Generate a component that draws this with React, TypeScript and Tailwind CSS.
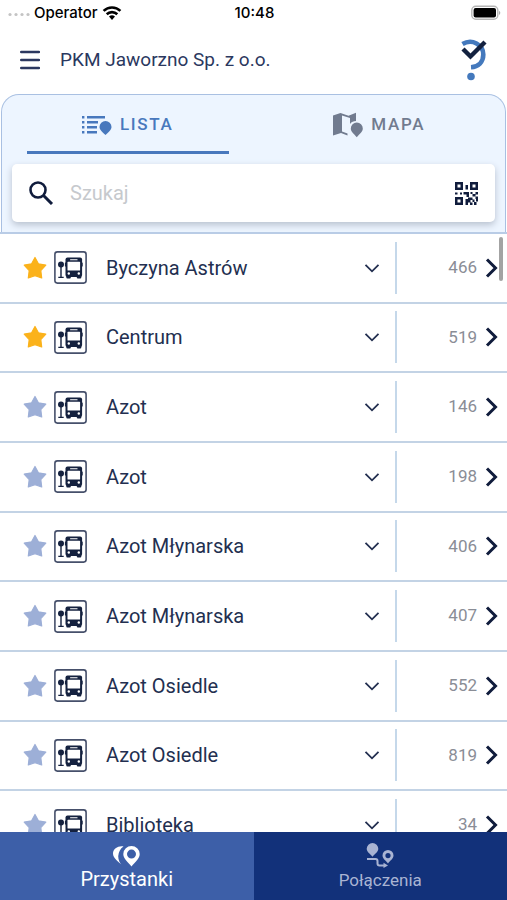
import { useState } from "react";

interface Stop {
  id: number;
  name: string;
  code: number;
  favourite: boolean;
}

const initialStops: Stop[] = [
  { id: 1, name: "Byczyna Astrów", code: 466, favourite: true },
  { id: 2, name: "Centrum", code: 519, favourite: true },
  { id: 3, name: "Azot", code: 146, favourite: false },
  { id: 4, name: "Azot", code: 198, favourite: false },
  { id: 5, name: "Azot Młynarska", code: 406, favourite: false },
  { id: 6, name: "Azot Młynarska", code: 407, favourite: false },
  { id: 7, name: "Azot Osiedle", code: 552, favourite: false },
  { id: 8, name: "Azot Osiedle", code: 819, favourite: false },
  { id: 9, name: "Biblioteka", code: 34, favourite: false },
];

function StatusBar() {
  return (
    <div className="grid grid-cols-3 items-center h-[26px] pl-2 pr-1.5 text-[15px] font-medium text-black font-['Inter',sans-serif]">
      <div className="flex items-center">
        <svg className="w-[22px] h-2 mr-1" viewBox="0 0 22 8" fill="#c4c4c4">
          <circle cx="2" cy="5.5" r="1.6" />
          <circle cx="8" cy="5.5" r="1.6" />
          <circle cx="14" cy="5.5" r="1.6" />
          <circle cx="20" cy="5.5" r="1.6" />
        </svg>
        Operator
        <svg className="w-5 h-4 ml-1" viewBox="0 0 20 16" fill="none" stroke="#000" strokeWidth="2.6">
          <path d="M1.6 5.9a12 12 0 0 1 16.8 0" />
          <path d="M4.7 9.3a7.6 7.6 0 0 1 10.6 0" />
          <path d="M7 11.6a4.3 4.3 0 0 1 6 0L10 15z" fill="#000" stroke="none" />
        </svg>
      </div>
      <span className="text-center">10:48</span>
      <svg className="w-[30px] h-4 justify-self-end" viewBox="0 0 30 16">
        <rect x="0.8" y="1.3" width="26" height="13" rx="4" fill="#fff" stroke="#b5b5b5" strokeWidth="1.4" />
        <rect x="2.6" y="3.1" width="22.4" height="9.4" rx="2" fill="#000" />
        <path d="M28.2 5.8c1.4.8 1.4 3.4 0 4.2z" fill="#999" />
      </svg>
    </div>
  );
}

function Logo() {
  return (
    <svg className="w-[26px] h-[42px]" viewBox="0 0 26 42" fill="none">
      <path
        d="M1.5 5C11-.5 22.3 5.500 22.300 15.500c0 7.500-5 12.300-12.300 12.700"
        stroke="#4479bd"
        strokeWidth="4.600"
      />
      <circle cx="10" cy="37.500" r="3.800" fill="#4479bd" />
      <path d="M2 10l7.500 7.500L24 3" stroke="#13213f" strokeWidth="4.400" />
    </svg>
  );
}

function ListIcon() {
  return (
    <svg className="w-[30px] h-5" viewBox="0 0 30 20" fill="currentColor">
      <path d="M0 1h2.400v2.400H0zM0 6h2.400v2.400H0zM0 11h2.400v2.400H0zM0 16h2.400v2.400H0zM5 1h18v2.600H5zM5 6h11v2.600H5zM5 11h10v2.600H5zM5 16h10v2.600H5z" />
      <path d="M23.500 6a6 6 0 0 1 6 6c0 3-3 5-6 8-3-3-6-5-6-8a6 6 0 0 1 6-6z" />
    </svg>
  );
}

function MapIcon() {
  return (
    <svg className="w-[30px] h-[26px]" viewBox="0 0 30 26" fill="currentColor">
      <path
        fillRule="evenodd"
        d="M0 3.500L7.500 1l8 2.700L23 .8V9c-2.500 0-4.500.8-6 3V6L9 3.500v16l5.500 1.900v2L8 21l-8 2.500z"
      />
      <path d="M23.800 10.500a6 6 0 0 1 6 6c0 3.200-3 5.200-6 8.700-3-3.500-6-5.500-6-8.700a6 6 0 0 1 6-6z" />
    </svg>
  );
}

function QrIcon() {
  return (
    <svg className="w-6 h-6" viewBox="0 0 24 24" fill="#101c3c">
      <path
        fillRule="evenodd"
        d="M0 1h8v8H0zM2.500 3.500v3h3v-3zM15 1h8v8h-8zM17.500 3.500v3h3v-3zM0 16h8v8H0zM2.500 18.500v3h3v-3z"
      />
      <path d="M10.500 4h2.500v4.500h-2.500zM0 11.500h2.500v2H0zM5 11.500h2v2H5zM8.500 11h5.500v5h-2.500v-2.500h-3zM15.500 11h2v2h-2zM20.500 11H23v2.500h-2.500zM17.500 13h3v2.500h-3zM10.500 18h2.500v-1.500h4.500V19h-2v2.500h-2.500V24h-2.500zM20.500 15.500H23v5h-2v-2.500h-.5zM17.500 18.500h2v2.500h-2zM15 21.500h2.500V24H15zM19 21h2.500v3H19z" />
    </svg>
  );
}

function StarIcon({ active }: { active: boolean }) {
  return (
    <svg
      className={active ? "w-6 h-6 text-[#fbb21b]" : "w-6 h-6 text-[#9dafd7]"}
      viewBox="0 0 24 24"
      fill="currentColor"
      stroke="currentColor"
      strokeWidth="1.200"
      strokeLinejoin="round"
    >
      <path d="M12 1.500l3.400 6.300 7.400 1.300-5 5.500.9 7.400L12 19.600l-6.700 2.400.9-7.400-5-5.500 7.400-1.300z" />
    </svg>
  );
}

function BusStopIcon() {
  return (
    <svg className="w-[33px] h-[33px] shrink-0" viewBox="0 0 33 33" fill="none">
      <rect x="0.900" y="0.900" width="31.200" height="31.200" rx="2.500" stroke="#46506b" strokeWidth="1.600" />
      <g fill="#14213f">
        <circle cx="7" cy="13.500" r="3" />
        <path d="M6.300 14h1.400v11.800h2V27H4.300v-1.200h2z" />
        <rect x="11.500" y="6.500" width="16.600" height="19.500" rx="2" />
        <rect x="10.900" y="11.500" width="17.800" height="4" rx="0.600" />
        <rect x="12.300" y="23" width="4.500" height="4.600" rx="1" />
        <rect x="22.800" y="23" width="4.500" height="4.600" rx="1" />
      </g>
      <g fill="#fff">
        <rect x="13.500" y="10.800" width="12.600" height="8.700" rx="0.600" />
        <rect x="16" y="8.200" width="7.600" height="1.100" rx="0.500" />
        <circle cx="14.800" cy="22.500" r="1.200" />
        <circle cx="24.800" cy="22.500" r="1.200" />
      </g>
    </svg>
  );
}

function StopRow({ stop, onToggle }: { stop: Stop; onToggle: () => void }) {
  return (
    <li className="flex items-center pl-[23px] pr-2 border-b-2 border-[#c3d3e5]">
      <button type="button" aria-label="Ulubiony" aria-pressed={stop.favourite} onClick={onToggle}>
        <StarIcon active={stop.favourite} />
      </button>
      <button type="button" className="flex flex-1 items-center pl-[7px] pr-[15px] text-left">
        <BusStopIcon />
        <span className="flex-1 pl-[19px] text-xl text-[#232f50]">{stop.name}</span>
        <svg className="w-4 h-2.5" viewBox="0 0 16 10" fill="none" stroke="#232f50" strokeWidth="1.800">
          <path d="M1.500 1.800L8 8.300l6.500-6.500" />
        </svg>
      </button>
      <a
        href="#odjazdy"
        className="flex items-center justify-end gap-2 w-[104px] h-[52px] border-l-2 border-[#c5d8ea] text-[17px] text-[#8a8d96]"
      >
        {stop.code}
        <svg className="w-3.5 h-5" viewBox="0 0 14 20" fill="none" stroke="#101c3c" strokeWidth="3">
          <path d="M2 1.500l8.500 8.500L2 18.500" />
        </svg>
      </a>
    </li>
  );
}

export default function App() {
  const [stops, setStops] = useState(initialStops);
  const [tab, setTab] = useState("lista");
  const [query, setQuery] = useState("");

  const toggleFavourite = (id: number) =>
    setStops(stops.map((s) => (s.id === id ? { ...s, favourite: !s.favourite } : s)));

  const visible = stops.filter((s) => s.name.toLowerCase().includes(query.toLowerCase()));

  return (
    <div className="flex flex-col h-screen bg-white font-['Roboto',sans-serif]">
      <StatusBar />

      {/* Header */}
      <header className="flex items-center h-[68px] px-5">
        <button type="button" aria-label="Menu">
          <svg className="w-5 h-5" viewBox="0 0 20 20" stroke="#2b3860" strokeWidth="2.400" strokeLinecap="round">
            <path d="M1.200 2h17.800M1.200 10h17.800M1.200 18h17.800" />
          </svg>
        </button>
        <h1 className="flex-1 pl-5 text-[19px] text-[#2b3860]">PKM Jaworzno Sp. z o.o.</h1>
        <Logo />
      </header>

      {/* Tabs and search */}
      <section className="mx-px pb-2.5 bg-[#edf5ff] border border-b-0 border-[#a9c0e2] rounded-t-[18px]">
        <div role="tablist" className="grid grid-cols-2 h-[59px]">
          <button
            type="button"
            role="tab"
            aria-selected={tab === "lista"}
            onClick={() => setTab("lista")}
            className="flex items-center justify-center gap-2 mx-[25px] pt-1 border-b-[3px] border-[#4878bd] text-[#4878bd] text-[17px] font-medium tracking-widest"
          >
            <ListIcon />
            LISTA
          </button>
          <button
            type="button"
            role="tab"
            aria-selected={tab === "mapa"}
            onClick={() => setTab("mapa")}
            className="flex items-center justify-center gap-2 mx-[25px] pt-1 border-b-[3px] border-transparent text-[#717b8f] text-[17px] font-medium tracking-widest"
          >
            <MapIcon />
            MAPA
          </button>
        </div>
        <div className="flex items-center h-[58px] mx-2.5 mt-[10px] px-4 bg-white rounded-[5px] shadow-[0_3px_7px_#b8c1cf]">
          <svg className="w-[26px] h-6" viewBox="0 0 26 24" fill="none" stroke="#101c3c">
            <circle cx="10" cy="9" r="7.500" strokeWidth="2.600" />
            <path d="M15.500 14.500l8.500 8.500" strokeWidth="3" />
          </svg>
          <input
            type="text"
            aria-label="Szukaj"
            placeholder="Szukaj"
            value={query}
            onChange={(e) => setQuery(e.target.value)}
            className="flex-1 min-w-0 pl-4 text-xl text-[#232f50] placeholder:text-[#c6c9cd] outline-none"
          />
          <button type="button" aria-label="Skanuj kod QR">
            <QrIcon />
          </button>
        </div>
      </section>

      {/* Stops */}
      <main className="relative flex-1 min-h-0 overflow-hidden border-t-2 border-[#b9cce6]">
        <ul className="grid grid-rows-9 h-[627px]">
          {visible.map((stop) => (
            <StopRow key={stop.id} stop={stop} onToggle={() => toggleFavourite(stop.id)} />
          ))}
        </ul>
        <div className="absolute top-[3px] right-1 w-1 h-11 rounded-full bg-[#a3a3a3]" />
      </main>

      {/* Bottom navigation */}
      <nav className="grid grid-cols-2 h-[68px] text-center">
        <a href="#przystanki" className="flex flex-col items-center pt-3.5 bg-[#3d5fa8] text-white text-xl leading-6">
          <svg className="w-[27px] h-[21px] shrink-0" viewBox="0 0 27 21" fill="currentColor">
            <path d="M10.500.500A12 12 0 0 0 10 20C5 15.500 0 12 0 7.500 0 2.500 5.500-.5 10.500.500z" />
            <path
              fillRule="evenodd"
              d="M18.500 0A8.200 8.200 0 0 1 26.700 8c0 4.500-4.500 8-8.200 12.500C14.800 16 10.300 12.500 10.300 8a8.200 8.200 0 0 1 8.200-8zm0 3.600a4.500 4.500 0 1 0 0 9 4.500 4.500 0 0 0 0-9z"
            />
          </svg>
          Przystanki
        </a>
        <a href="#polaczenia" className="flex flex-col items-center pt-2.5 bg-[#12317a] text-[#a9b4d3] text-[17px] leading-6">
          <svg className="w-7 h-[26px] shrink-0" viewBox="0 0 28 26" fill="currentColor">
            <path d="M6.500 1a5.800 5.800 0 0 1 5.800 5.800c0 3-3 4.700-5.800 8-2.800-3.300-5.800-5-5.800-8A5.800 5.800 0 0 1 6.500 1z" />
            <path
              fillRule="evenodd"
              d="M22 8a5.500 5.500 0 0 1 5.500 5.500c0 3-3 4.800-5.500 8-2.500-3.200-5.500-5-5.500-8A5.500 5.500 0 0 1 22 8zm0 3a2.600 2.600 0 1 0 0 5.200 2.600 2.600 0 0 0 0-5.200z"
            />
            <path d="M1 17h8.500q2 0 2 2v2.500q0 2 2 2h5" fill="none" stroke="currentColor" strokeWidth="2" />
            <path d="M17.500 20.800l4.500 2.700-4.500 2.500z" />
          </svg>
          Połączenia
        </a>
      </nav>
    </div>
  );
}
